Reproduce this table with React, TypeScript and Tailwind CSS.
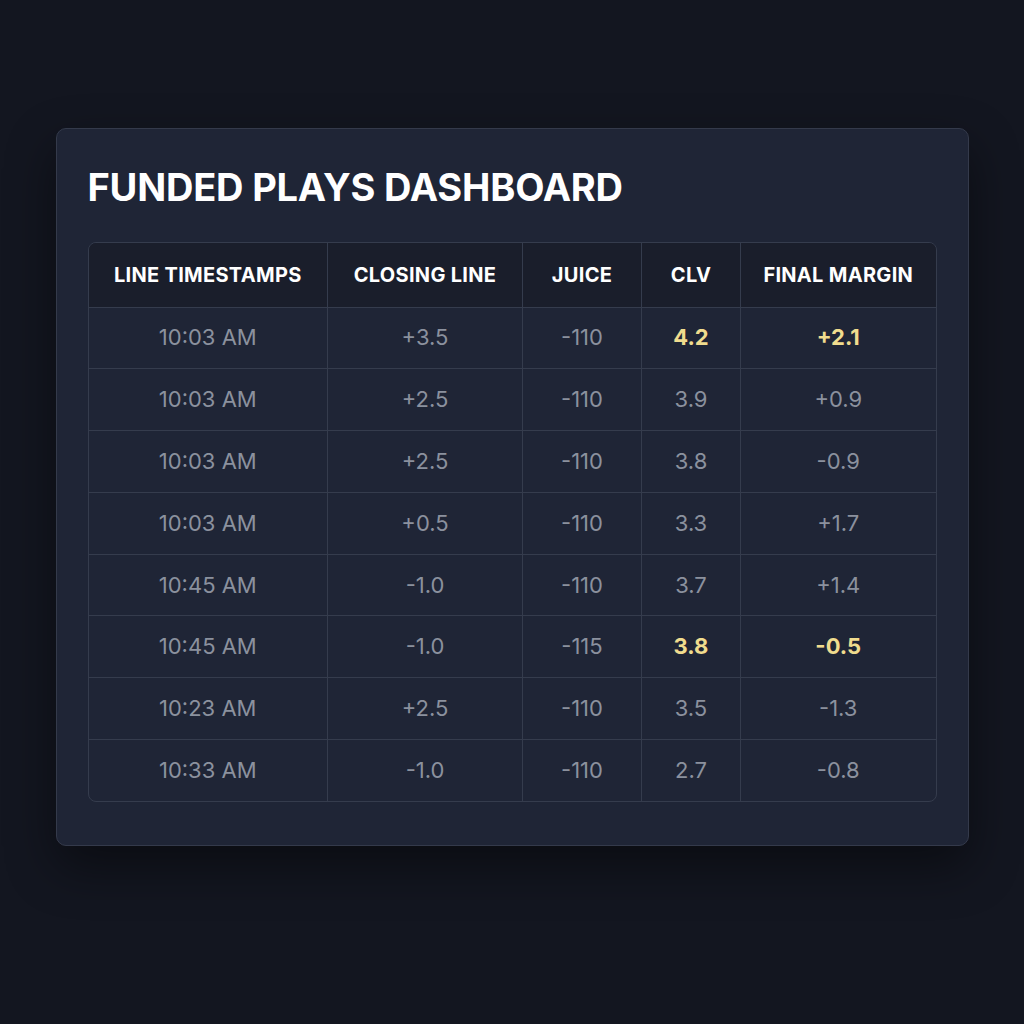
const rows = [
  { time: '10:03 AM', line: '+3.5', juice: '-110', clv: '4.2', margin: '+2.1', hot: true },
  { time: '10:03 AM', line: '+2.5', juice: '-110', clv: '3.9', margin: '+0.9' },
  { time: '10:03 AM', line: '+2.5', juice: '-110', clv: '3.8', margin: '-0.9' },
  { time: '10:03 AM', line: '+0.5', juice: '-110', clv: '3.3', margin: '+1.7' },
  { time: '10:45 AM', line: '-1.0', juice: '-110', clv: '3.7', margin: '+1.4' },
  { time: '10:45 AM', line: '-1.0', juice: '-115', clv: '3.8', margin: '-0.5', hot: true },
  { time: '10:23 AM', line: '+2.5', juice: '-110', clv: '3.5', margin: '-1.3' },
  { time: '10:33 AM', line: '-1.0', juice: '-110', clv: '2.7', margin: '-0.8' },
]

export default function App() {
  return (
    <div className="flex min-h-[1024px] w-full justify-center bg-[#131620] pt-[128px] font-['Inter',sans-serif]">
      <div className="h-[718px] w-[913px] rounded-[10px] border border-[#343a4b] bg-[#1f2536] px-[31px] pt-[35px] shadow-[0_20px_50px_rgba(0,0,0,0.45)]">
        <h1 className="text-[38px] font-bold leading-[46px] tracking-[-0.2px] text-white">FUNDED PLAYS DASHBOARD</h1>
        <div className="mt-[32px] overflow-hidden rounded-[8px] border border-[#353c4d]">
          <table className="w-full border-collapse text-center">
            <thead className="bg-[#1a1e2b] text-white">
              <tr className="h-[64px]">
                <th className="w-[239px] border-r border-[#353c4d] text-[20px] font-bold tracking-[0.3px]">LINE TIMESTAMPS</th>
                <th className="w-[195px] border-r border-[#353c4d] text-[20px] font-bold tracking-[0.3px]">CLOSING LINE</th>
                <th className="w-[119px] border-r border-[#353c4d] text-[20px] font-bold tracking-[0.3px]">JUICE</th>
                <th className="w-[99px] border-r border-[#353c4d] text-[20px] font-bold tracking-[0.3px]">CLV</th>
                <th className="text-[20px] font-bold tracking-[0.3px]">FINAL MARGIN</th>
              </tr>
            </thead>
            <tbody className="text-[22px] text-[#8b919e]">
              {rows.map((row, i) => (
                <tr key={i} className="h-[61.8px] border-t border-[#353c4d]">
                  <td className="border-r border-[#353c4d]">{row.time}</td>
                  <td className="border-r border-[#353c4d]">{row.line}</td>
                  <td className="border-r border-[#353c4d]">{row.juice}</td>
                  <td className={row.hot ? 'border-r border-[#353c4d] font-bold text-[#f0dc8e]' : 'border-r border-[#353c4d]'}>{row.clv}</td>
                  <td className={row.hot ? 'font-bold text-[#f0dc8e]' : ''}>{row.margin}</td>
                </tr>
              ))}
            </tbody>
          </table>
        </div>
      </div>
    </div>
  )
}
